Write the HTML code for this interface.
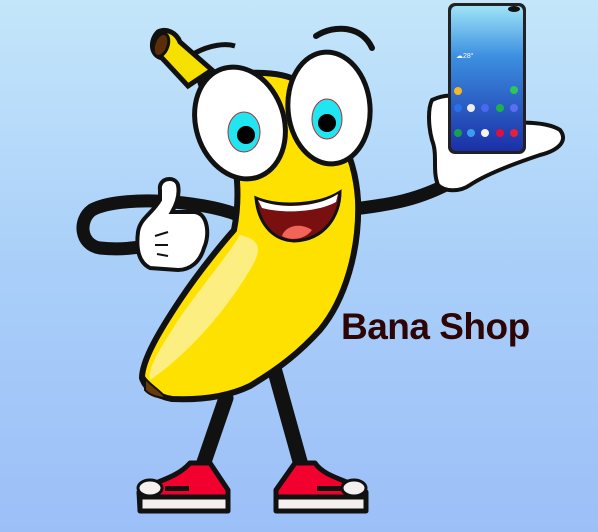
<!DOCTYPE html>
<html><head><style>
html,body{margin:0;padding:0;width:598px;height:532px;overflow:hidden}
body{background:linear-gradient(#c4e6fa,#a9cff9 50%,#9cbff8)}
svg{position:absolute;left:0;top:0}
.t{position:absolute;left:341px;top:306px;font:bold 37px "Liberation Sans",sans-serif;color:#2e0505;letter-spacing:-0.5px}
</style></head><body>
<svg width="598" height="532" viewBox="0 0 598 532">
<defs>
<linearGradient id="scr" x1="0" y1="0" x2="0" y2="1"><stop offset="0" stop-color="#9fe3f6"/><stop offset="0.35" stop-color="#3b8fe0"/><stop offset="1" stop-color="#1b2fa8"/></linearGradient>
</defs>
<path d="M238,215 C200,200 120,195 92,210 C78,220 80,245 100,248 C120,250 135,248 145,246" fill="none" stroke="#111" stroke-width="13" stroke-linecap="round"/>
<path d="M345,210 C390,205 420,200 455,180" fill="none" stroke="#111" stroke-width="13" stroke-linecap="round"/>
<path d="M226,398 L203,465" stroke="#111" stroke-width="15" stroke-linecap="round"/>
<path d="M274,368 L301,465" stroke="#111" stroke-width="15" stroke-linecap="round"/>
<g stroke="#111" stroke-width="5" stroke-linejoin="round">
<path d="M190,463 L210,463 L228,490 L228,510 L140,510 L139,492 C150,482 175,480 190,463Z" fill="#f2002e"/>
<path d="M140,497 L228,497 L228,511 L140,511Z" fill="#f4f0f0"/>
<ellipse cx="150" cy="488" rx="12" ry="8" fill="#f4f0f0" stroke-width="3"/>
<path d="M295,463 L315,463 C325,478 350,480 366,492 L366,510 L276,510 L276,490Z" fill="#f2002e"/>
<path d="M276,497 L366,497 L366,511 L276,511Z" fill="#f4f0f0"/>
<ellipse cx="354" cy="488" rx="12" ry="8" fill="#f4f0f0" stroke-width="3"/>
</g>
<rect x="165" y="486" width="24" height="5" fill="#111"/>
<rect x="317" y="486" width="24" height="5" fill="#111"/>
<path d="M158,32 C150,40 150,55 162,58 L188,86 L212,70 L180,42 C176,32 166,28 158,32Z" fill="#f5e000" stroke="#111" stroke-width="5"/>
<ellipse cx="161" cy="45" rx="7" ry="12" fill="#5a2e08" stroke="#111" stroke-width="3" transform="rotate(20 161 45)"/>
<path d="M195,53 C210,45 225,43 235,46" fill="none" stroke="#111" stroke-width="5"/>
<path d="M200,80 C240,70 280,70 300,82 C330,110 355,150 358,200 C360,250 345,300 320,330 C300,352 280,368 250,386 C225,398 195,400 172,399 C155,396 145,388 142,378 C142,360 160,330 180,300 C200,270 225,240 234,230 C240,200 238,170 230,140 C220,110 200,90 200,80Z" fill="#ffe100" stroke="#111" stroke-width="6"/>
<path d="M240,235 C225,260 190,300 172,330 C158,352 148,368 150,380 C180,360 220,320 250,270 C262,250 262,240 240,235Z" fill="#fcee80"/>
<path d="M145,378 C150,385 160,390 166,398 C160,398 150,396 145,390Z" fill="#6b3a0a" stroke="#111" stroke-width="2"/>
<ellipse cx="240" cy="123" rx="44" ry="57" fill="#fff" stroke="#111" stroke-width="5" transform="rotate(-18 240 123)"/>
<ellipse cx="329" cy="108" rx="41" ry="56" fill="#fff" stroke="#111" stroke-width="5" transform="rotate(-5 329 108)"/>
<ellipse cx="244" cy="132" rx="16" ry="20" fill="#22e5f2" stroke="#a33" stroke-width="1"/>
<circle cx="246" cy="135" r="9" fill="#000"/>
<ellipse cx="327" cy="119" rx="15" ry="20" fill="#22e5f2" stroke="#a33" stroke-width="1"/>
<circle cx="327" cy="123" r="9" fill="#000"/>
<path d="M316,36 C335,24 362,26 372,48" fill="none" stroke="#111" stroke-width="6" stroke-linecap="round"/>
<path d="M256,198 C280,208 320,205 340,192 C340,215 325,240 294,241 C270,240 258,220 256,198Z" fill="#7a0f10" stroke="#111" stroke-width="3"/>
<path d="M258,200 C282,210 318,207 338,194 L336,202 C318,212 284,214 262,208Z" fill="#fff"/>
<path d="M282,236 C285,226 300,222 312,230 C305,240 290,241 282,236Z" fill="#f26458"/>
<path d="M160,190 C158,178 175,175 178,185 C180,195 176,205 172,212 L195,212 C208,214 210,235 204,248 C200,262 190,270 178,270 L150,268 C138,262 136,248 138,232 C140,218 152,214 160,200Z" fill="#fff" stroke="#111" stroke-width="4"/>
<path d="M155,236 L168,232 M155,245 L168,245 M157,254 L168,256" stroke="#111" stroke-width="2"/>
<path d="M432,100 C450,92 465,95 472,110 L480,125 C510,122 545,120 560,130 C568,140 560,150 540,155 C510,165 485,175 470,185 C460,192 445,192 438,185 C432,170 438,155 432,140 C428,125 428,108 432,100Z" fill="#fff" stroke="#111" stroke-width="4"/>
<rect x="448" y="3" width="78" height="151" rx="7" fill="#222"/>
<rect x="451" y="6" width="72" height="145" rx="5" fill="url(#scr)"/>
<ellipse cx="514" cy="9" rx="6" ry="3" fill="#111"/>
<g>
<circle cx="458" cy="91" r="4" fill="#f5b820"/><circle cx="514" cy="90" r="4" fill="#2ec55a"/>
<circle cx="458" cy="108" r="4" fill="#2a70e8"/><circle cx="471" cy="108" r="4" fill="#eee"/><circle cx="485" cy="108" r="4" fill="#4a68f0"/><circle cx="500" cy="108" r="4" fill="#1bb24c"/><circle cx="514" cy="108" r="4" fill="#5a6ef0"/>
<circle cx="458" cy="133" r="4" fill="#18a050"/><circle cx="471" cy="133" r="4" fill="#3d9cf0"/><circle cx="485" cy="133" r="4" fill="#f4f4f4"/><circle cx="500" cy="133" r="4" fill="#e0103a"/><circle cx="514" cy="133" r="4" fill="#e8203a"/>
</g>
<text x="456" y="58" font-family="Liberation Sans" font-size="7" fill="#fff">☁28°</text>
</svg>
<div class="t">Bana Shop</div>
</body></html>
